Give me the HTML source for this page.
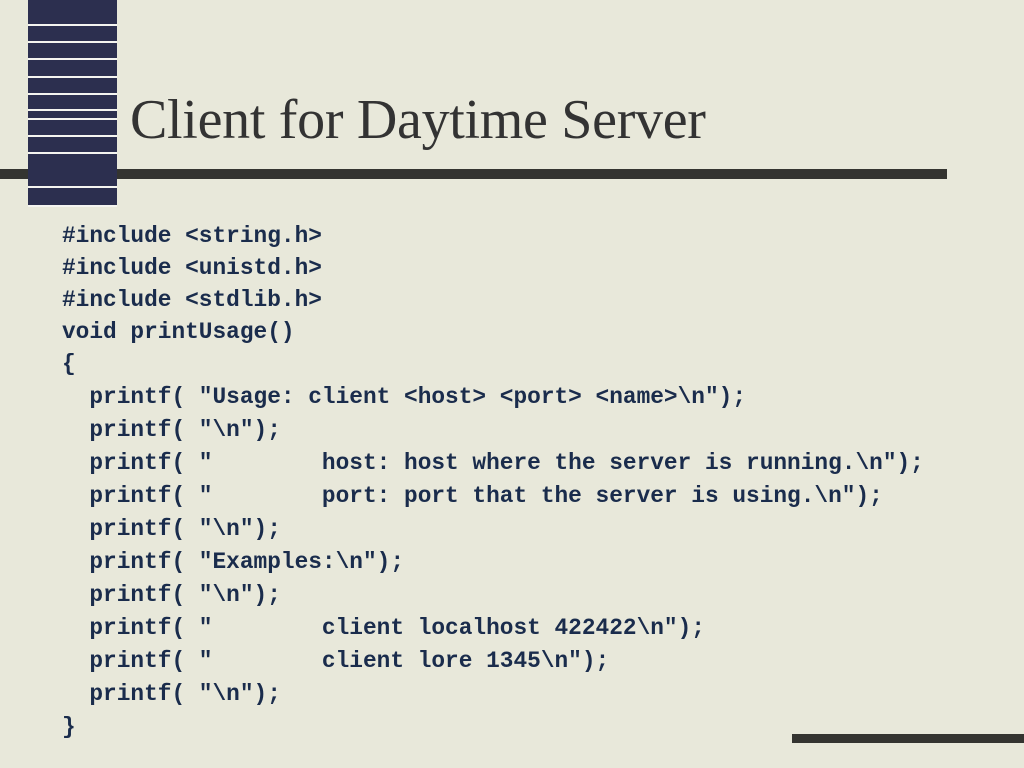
<!DOCTYPE html>
<html><head><style>
body{margin:0;width:1024px;height:768px;overflow:hidden;background:#e8e8da;position:relative;font-family:"Liberation Sans",sans-serif}
.bar{position:absolute;background:#343430}
#blk{position:absolute;left:28px;top:0;width:89px;height:206px;background:#2c2f4f}
.wl{position:absolute;left:28px;width:89px;height:2px;background:#f4f4f0}
h1{position:absolute;left:130px;top:88px;margin:0;font:normal 56px "Liberation Serif",serif;color:#333;white-space:nowrap;letter-spacing:-0.3px}
pre{position:absolute;margin:0;left:62px;font:bold 22.8px "Liberation Mono",monospace;color:#1a2c4c;white-space:pre}
</style></head><body>
<div class="bar" style="left:0;top:169px;width:947px;height:10px"></div>
<div id="blk"></div>
<div class="wl" style="top:24px"></div><div class="wl" style="top:41px"></div><div class="wl" style="top:58px"></div><div class="wl" style="top:76px"></div><div class="wl" style="top:93px"></div><div class="wl" style="top:109px"></div><div class="wl" style="top:118px"></div><div class="wl" style="top:135px"></div><div class="wl" style="top:152px"></div><div class="wl" style="top:186px"></div><div class="wl" style="top:205px"></div>
<div class="bar" style="left:792px;top:734px;width:232px;height:9px"></div>
<h1>Client for Daytime Server</h1>
<pre style="top:220px;line-height:32px">#include &lt;string.h&gt;
#include &lt;unistd.h&gt;
#include &lt;stdlib.h&gt;
void printUsage()
{</pre>
<pre style="top:381px;line-height:33px">  printf( "Usage: client &lt;host&gt; &lt;port&gt; &lt;name&gt;\n");
  printf( "\n");
  printf( "        host: host where the server is running.\n");
  printf( "        port: port that the server is using.\n");
  printf( "\n");
  printf( "Examples:\n");
  printf( "\n");
  printf( "        client localhost 422422\n");
  printf( "        client lore 1345\n");
  printf( "\n");
}</pre>
</body></html>
